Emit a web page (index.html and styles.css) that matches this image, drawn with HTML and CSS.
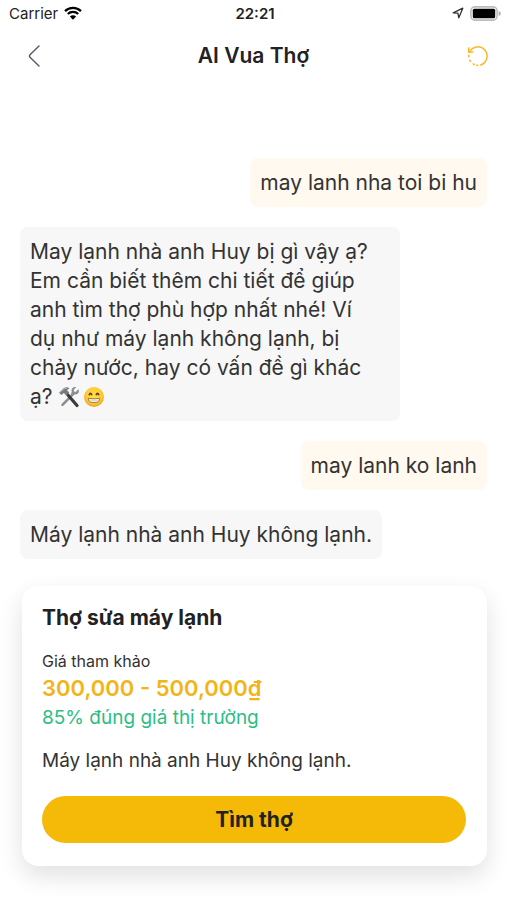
FILE: index.html
```html
<!DOCTYPE html>
<html lang="vi">
<head>
<meta charset="utf-8">
<meta name="viewport" content="width=device-width, initial-scale=1">
<title>AI Vua Thợ</title>
<link rel="stylesheet" href="styles.css">
</head>
<body>
<div class="status">
  <div class="status-left">
    <span>Carrier</span>
    <svg class="wifi" viewBox="0 0 18 14" width="18" height="14" aria-hidden="true">
      <path d="M1 5.1a11.3 11.3 0 0 1 16 0M3.8 8a7.4 7.4 0 0 1 10.4 0" fill="none" stroke="#000" stroke-width="2.3"/>
      <path d="M9 13.8 5.9 10.6a4.4 4.4 0 0 1 6.2 0z" fill="#000"/>
    </svg>
  </div>
  <time class="clock">22:21</time>
  <div class="status-right">
    <svg viewBox="0 0 12 12" width="12" height="12" aria-hidden="true"><path d="M1.2 5.8 10.8 1.2 6.8 10.8 5.9 6.1z" fill="none" stroke="#333" stroke-width="1.3" stroke-linejoin="round"/></svg>
    <svg viewBox="0 0 31 15" width="31" height="15" aria-hidden="true">
      <rect x=".9" y=".9" width="26.2" height="13.2" rx="4" fill="#fff" stroke="#bcbcbc" stroke-width="1.6"/>
      <rect x="2.8" y="2.8" width="22.4" height="9.4" rx="1.5" fill="#000"/>
      <path d="M28.700 5Q30.800 5.800 30.800 7.500T28.700 10z" fill="#aaa"/>
    </svg>
  </div>
</div>
<header class="nav">
  <button class="icon-button back" type="button" aria-label="Quay lại">
    <svg viewBox="0 0 12 22" width="12" height="22"><path d="M11 1 2 9.700Q1 11 2 12.300L11 21" fill="none" stroke="#5c5c66" stroke-width="1.5" stroke-linecap="round" stroke-linejoin="round"/></svg>
  </button>
  <h1>AI Vua Thợ</h1>
  <button class="icon-button reload" type="button" aria-label="Làm mới">
    <svg viewBox="0 0 22 22" width="22" height="22" fill="none" stroke="#f5b92e" stroke-width="1.5" stroke-linecap="round" stroke-linejoin="round">
      <path d="M2.700 6.600A9.300 9.300 0 1 1 13.700 20"/><path d="M1.700 3v4.200l4.200-.3"/><path d="M1.800 10.200v1.600M2.800 15.200l.7 1.200M6.200 18.900l1 .6M9.800 20.300h1"/>
    </svg>
  </button>
</header>
<main class="chat">
  <p class="bubble mine">may lanh nha toi bi hu</p>
  <p class="bubble long">May lạnh nhà anh Huy bị gì vậy ạ? Em cần biết thêm chi tiết để giúp anh tìm thợ phù hợp nhất nhé! Ví dụ như máy lạnh không lạnh, bị chảy nước, hay có vấn đề gì khác ạ? <svg class="emoji" viewBox="0 0 22 22" width="22" height="22" role="img" aria-label="Búa và cờ lê"><path d="M4.500 18.800 16 7.200" stroke="#8b8e92" stroke-width="2.600" stroke-linecap="round"/><path d="M20.400 3.200 17.700 5.900 16 5.400 15.700 3.800 18.200 1.200C15 .4 12.900 3 13.800 5.700L13 7.500 15 9.300 16.700 8.300C19.600 9 22 6.200 20.400 3.200z" fill="#8b8e92"/><path d="M9.500 8.500 19 19.500" stroke="#383b3f" stroke-width="3.200" stroke-linecap="round"/><path d="M1 6.700 5.700 2.200Q8.500.5 11.500 2.200L9 3.900 11.200 6.800 8.200 9.500 5.900 6.900 3.300 9z" fill="#777b80"/><path d="M2 6.400 6.200 2.600 9 2.200" fill="none" stroke="#b4b7ba"/></svg> <svg class="emoji" viewBox="0 0 22 22" width="22" height="22" role="img" aria-label="Mặt cười"><defs><radialGradient id="face" cx=".5" cy=".42" r=".58"><stop offset="0" stop-color="#ffe14a"/><stop offset=".7" stop-color="#fdca35"/><stop offset="1" stop-color="#eca126"/></radialGradient></defs><circle cx="11" cy="11" r="10" fill="url(#face)"/><path d="M6.300 8.600q1.200-2.300 2.400 0M13.300 8.600q1.200-2.300 2.400 0" fill="none" stroke="#5f3b0e" stroke-width="1.700" stroke-linecap="round"/><path d="M5.300 12.400q5.700.8 11.400 0 .5 4.300-5.700 4.300t-5.700-4.300z" fill="#f4f0e4" stroke="#94631d" stroke-width=".8"/><path d="M6 14.600h10" stroke="#c9bfa8" stroke-width=".5"/></svg></p>
  <p class="bubble mine">may lanh ko lanh</p>
  <p class="bubble">Máy lạnh nhà anh Huy không lạnh.</p>
  <article class="card">
    <h2>Thợ sửa máy lạnh</h2>
    <p class="label">Giá tham khảo</p>
    <p class="price">300,000 - 500,000₫</p>
    <p class="market">85% đúng giá thị trường</p>
    <p class="note">Máy lạnh nhà anh Huy không lạnh.</p>
    <button class="primary" type="button">Tìm thợ</button>
  </article>
</main>
</body>
</html>
```
FILE: styles.css
```css
* { box-sizing: border-box; }
body {
  margin: 0;
  background: #fff;
  color: #333;
  font-family: Inter, "Noto Sans", sans-serif;
}
h1, h2, p { margin: 0; }
button { font: inherit; border: 0; cursor: pointer; }
svg { display: block; }
.status {
  display: grid;
  grid-template-columns: 1fr auto 1fr;
  align-items: center;
  height: 26px;
  padding: 0 6px 0 9px;
  color: #222;
  font-size: 15px;
}
.status-left, .status-right { display: flex; align-items: center; gap: 6px; }
.status-right { justify-content: flex-end; }
.clock { font-weight: 600; }
.nav {
  display: grid;
  grid-template-columns: 1fr auto 1fr;
  align-items: center;
  height: 60px;
  padding: 0 18px;
}
h1 { color: #222; font-size: 21px; line-height: 28px; font-weight: 600; }
.icon-button { display: flex; padding: 0; background: none; }
.back { padding: 0 10px; }
.reload { justify-self: end; }
.chat {
  display: flex;
  flex-direction: column;
  align-items: flex-start;
  gap: 20px;
  padding: 72px 20px 34px;
}
.bubble {
  max-width: 380px;
  padding: 10px;
  border-radius: 8px;
  background: #f7f7f7;
  font-size: 21px;
  line-height: 29px;
}
.long { padding-right: 24px; }
.mine { align-self: flex-end; background: #fff9f0; }
.emoji { display: inline-block; vertical-align: -4px; }
.emoji + .emoji { margin-left: -3px; }
.card {
  align-self: stretch;
  margin: 7px 0 0 2px;
  padding: 18px 21px 23px 20px;
  border-radius: 16px;
  background: #fff;
  box-shadow: 0 10px 24px rgba(0, 0, 0, 0.12);
}
h2 { color: #222; font-size: 21px; line-height: 28px; font-weight: 700; }
.label { margin-top: 18px; font-size: 16px; line-height: 22px; }
.price { color: #f2b416; font-size: 22px; line-height: 32px; font-weight: 600; }
.market { color: #2dbd85; font-size: 19px; line-height: 28px; }
.note { margin-top: 16px; font-size: 19px; line-height: 26px; }
.primary {
  display: block;
  width: 100%;
  height: 47px;
  margin-top: 22px;
  border-radius: 24px;
  background: #f5b908;
  color: #222;
  font-size: 21px;
  font-weight: 700;
}
```
